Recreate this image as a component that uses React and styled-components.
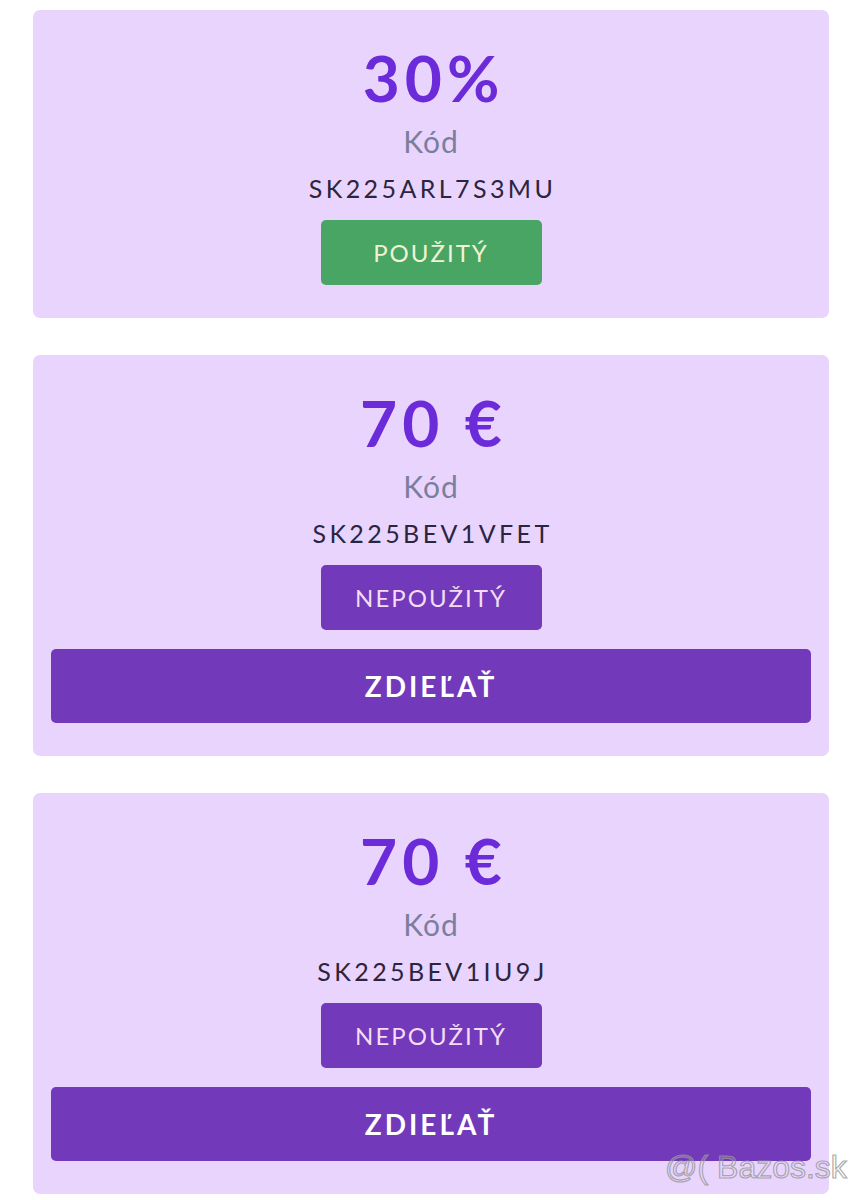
import React from 'react'
import styled, { createGlobalStyle } from 'styled-components';

const GlobalStyle = createGlobalStyle`
    body{
        margin: 0;
        background: #ffffff;
        font-family: 'Lato', 'Noto Sans', sans-serif;
    }
`;

const coupons = [
    { id: 1, value: '30%', code: 'SK225ARL7S3MU', used: true },
    { id: 2, value: '70 €', code: 'SK225BEV1VFET', used: false },
    { id: 3, value: '70 €', code: 'SK225BEV1IU9J', used: false },
];

function App() {
    return (
        <PageStyled>
            <GlobalStyle />
            {coupons.map((c) => (
                <Card key={c.id}>
                    <Amount>{c.value}</Amount>
                    <Label>Kód</Label>
                    <Code>{c.code}</Code>
                    <Status $used={c.used}>{c.used ? 'Použitý' : 'Nepoužitý'}</Status>
                    {!c.used && <ShareButton>Zdieľať</ShareButton>}
                </Card>
            ))}
            <Watermark>@( Bazos.sk</Watermark>
        </PageStyled>
    )
}

const PageStyled = styled.div`
    padding: 10px 33px 6px;
    display: flex;
    flex-direction: column;
    gap: 37px;
`;

const Card = styled.div`
    background: #e9d4fe;
    border-radius: 7px;
    padding: 33px 18px;
    display: flex;
    flex-direction: column;
    align-items: center;
`;

const Amount = styled.div`
    font-size: 64px;
    line-height: 70px;
    font-weight: 700;
    color: #6c2bd9;
    letter-spacing: 5px;
    padding-left: 5px;
`;

const Label = styled.div`
    margin-top: 10px;
    font-size: 30px;
    line-height: 36px;
    color: #7b7f9c;
    letter-spacing: 1px;
`;

const Code = styled.div`
    margin-top: 11px;
    font-size: 25px;
    line-height: 36px;
    color: #2b2540;
    letter-spacing: 3.4px;
    padding-left: 3px;
`;

const Status = styled.div`
    margin-top: 14px;
    width: 221px;
    height: 65px;
    border-radius: 5px;
    display: flex;
    align-items: center;
    justify-content: center;
    text-transform: uppercase;
    font-size: 24px;
    letter-spacing: 2px;
    background: ${(p) => (p.$used ? '#48a564' : '#7239ba')};
    color: ${(p) => (p.$used ? '#f2f3d2' : '#f3dcf4')};
`;

const ShareButton = styled.button`
    margin-top: 19px;
    width: 100%;
    height: 74px;
    border: none;
    border-radius: 5px;
    background: #7239ba;
    color: #ffffff;
    font-family: inherit;
    font-size: 28px;
    font-weight: 700;
    letter-spacing: 3px;
    text-transform: uppercase;
`;

const Watermark = styled.div`
    position: absolute;
    left: 665px;
    top: 1149px;
    font-family: 'Liberation Sans', Arial, sans-serif;
    font-size: 32px;
    color: rgba(255, 255, 255, 0.15);
    -webkit-text-stroke: 1.2px rgba(150, 150, 150, 0.8);
    white-space: nowrap;
`;

export default App;
